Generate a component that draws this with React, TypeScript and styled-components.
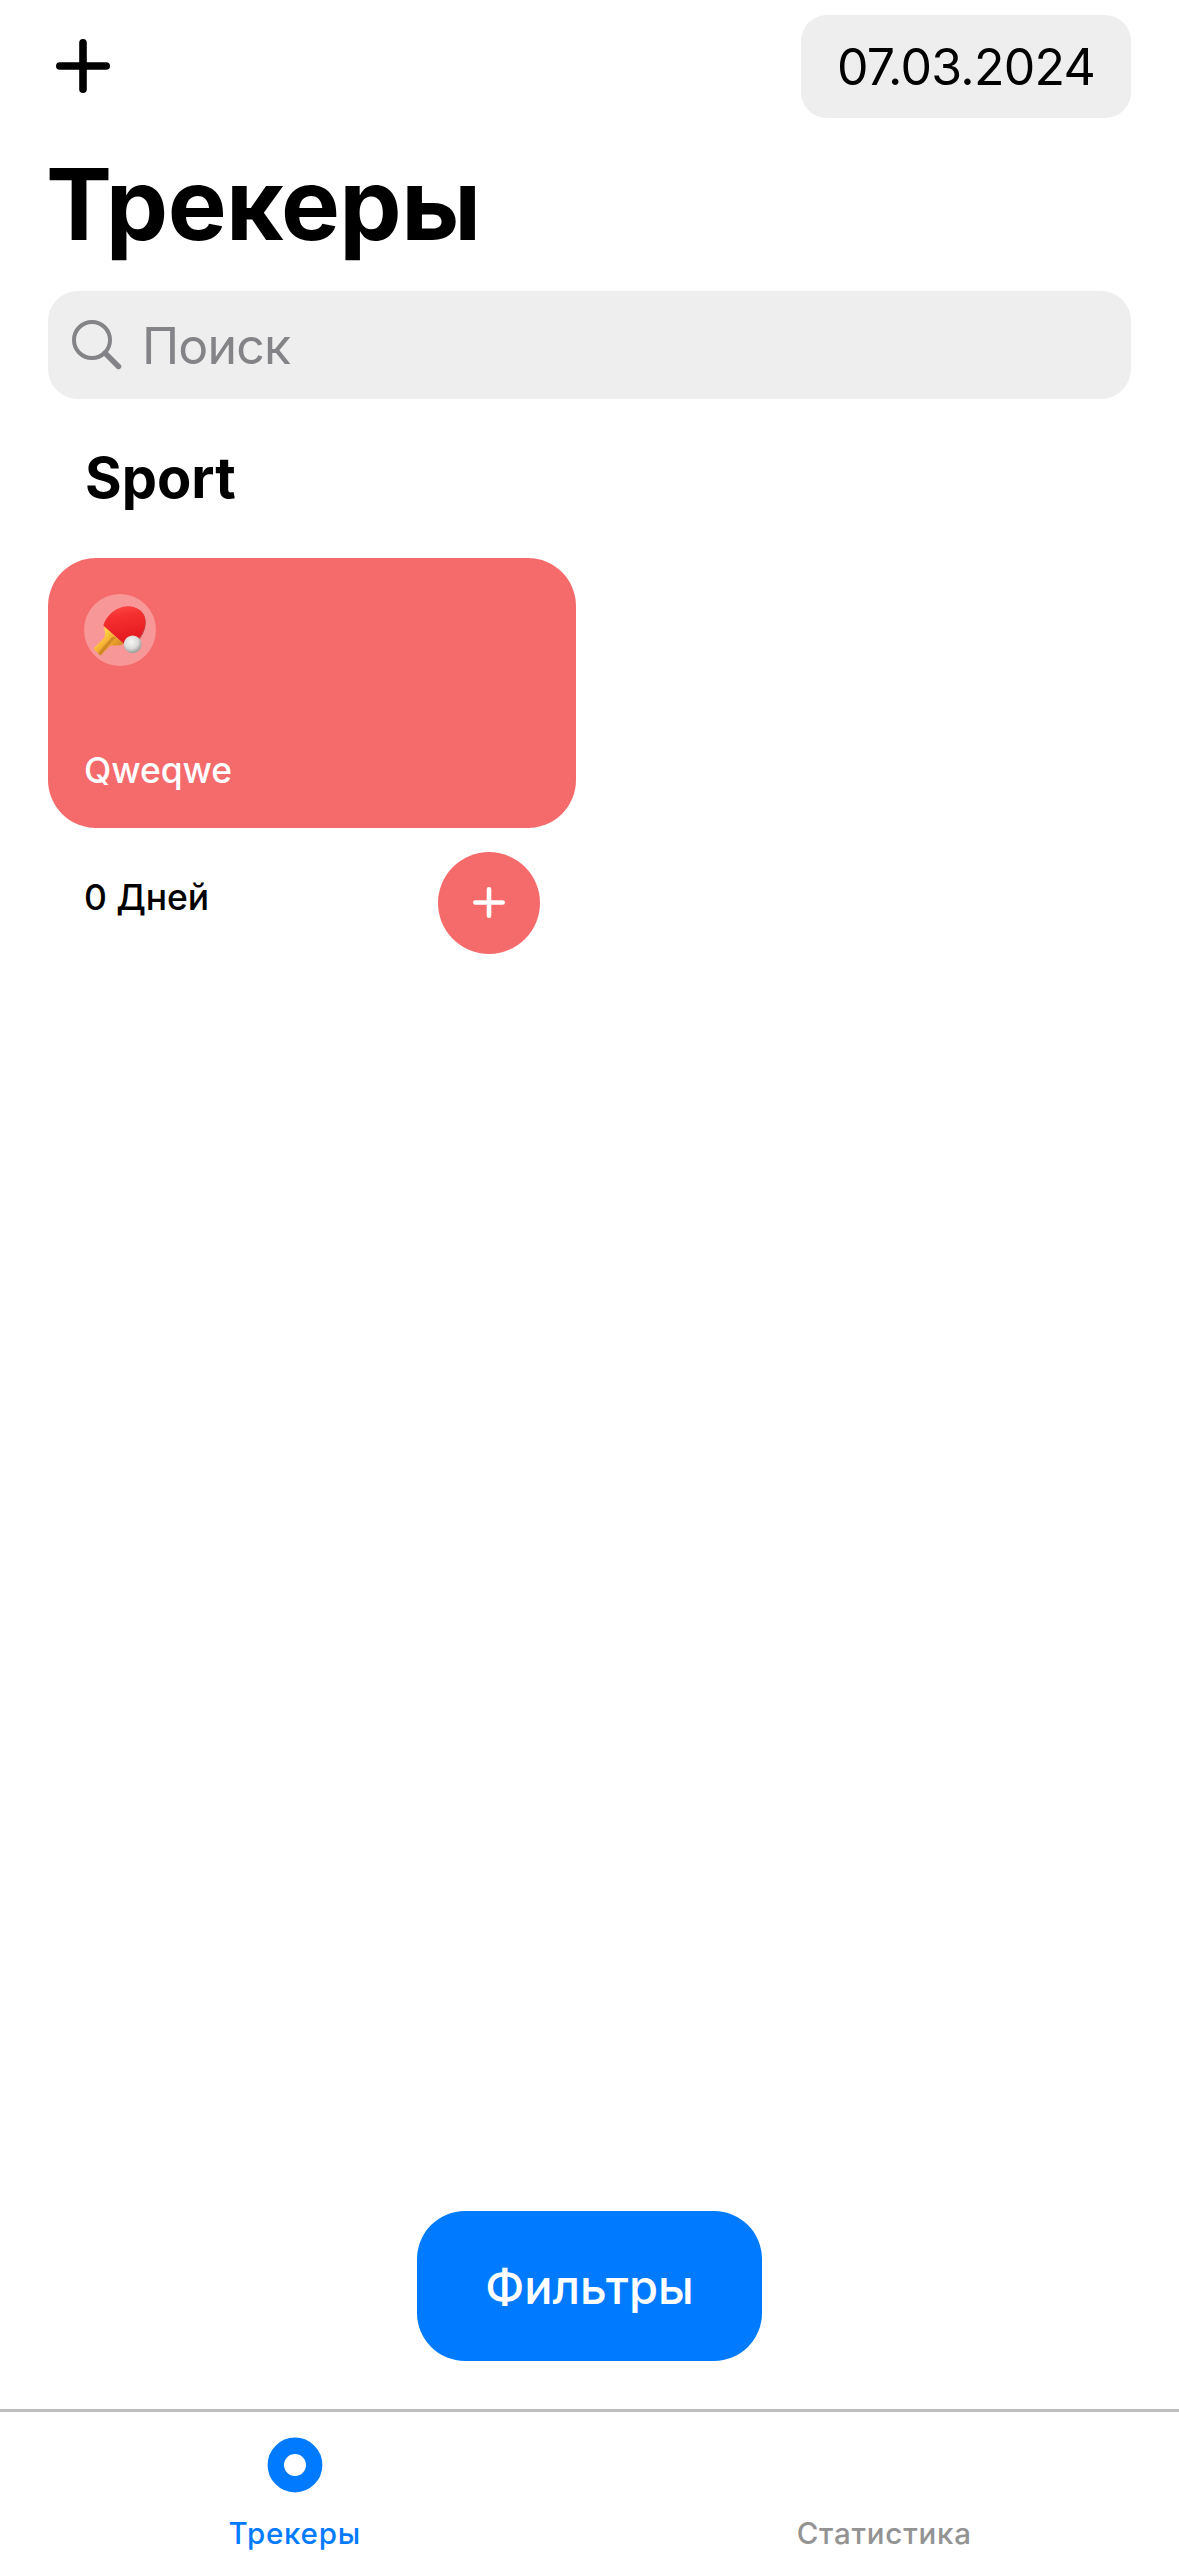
import React from "react";
import styled, { createGlobalStyle } from "styled-components";

const GlobalStyle = createGlobalStyle`
  * { box-sizing: border-box; }
  body { margin: 0; background: #fff; }
  button, input { font: inherit; border: 0; padding: 0; margin: 0; }
`;

const Screen = styled.div`
  width: 1179px;
  height: 2556px;
  display: flex;
  flex-direction: column;
  background: #ffffff;
  color: #000;
  font-family: Inter, "Liberation Sans", sans-serif;
  overflow: hidden;
`;

const Header = styled.header`
  display: flex;
  justify-content: space-between;
  align-items: flex-start;
  padding: 15px 48px 0;
  height: 118px;
`;

const AddButton = styled.button`
  display: flex;
  width: 70px;
  height: 102px;
  align-items: center;
  justify-content: center;
  background: none;
`;

const Text = styled.span<{ $size: number; $weight?: number; $spacing?: number }>`
  display: block;
  font-size: ${(p) => p.$size}px;
  font-weight: ${(p) => p.$weight ?? 400};
  letter-spacing: ${(p) => p.$spacing ?? 0}px;
  white-space: nowrap;
`;

const DatePill = styled.button`
  display: flex;
  width: 330px;
  height: 103px;
  padding: 1px 0 0 36px;
  align-items: center;
  border-radius: 26px;
  background: #eeeeee;
  color: #000;
`;

const Title = styled.h1`
  margin: 24px 0 0 46px;
  height: 124px;
  line-height: 124px;
  font-size: 99px;
  font-weight: 700;
  letter-spacing: -0.6px;
`;

const SearchField = styled.div`
  display: flex;
  align-items: center;
  gap: 20px;
  margin: 25px 48px 0;
  height: 108px;
  padding: 2px 24px 0;
  border-radius: 30px;
  background: #eeeeee;
  color: #848488;
  svg { margin-top: -3px; }
`;

const Section = styled.section`
  display: flex;
  flex-direction: column;
  padding: 0 48px;
`;

const SectionTitle = styled.h2`
  margin: 44px 0 45px 37px;
  height: 70px;
  line-height: 70px;
  font-size: 56px;
  font-weight: 700;
`;

const Grid = styled.div`
  display: grid;
  grid-template-columns: 528px 528px;
  gap: 27px;
`;

const Tracker = styled.article`
  display: flex;
  flex-direction: column;
`;

const Card = styled.div<{ $color: string }>`
  display: flex;
  flex-direction: column;
  justify-content: space-between;
  height: 270px;
  padding: 36px 36px 30px;
  border-radius: 48px;
  background: ${(p) => p.$color};
  color: #fff;
  line-height: 54px;
`;

const EmojiBadge = styled.div`
  display: flex;
  width: 72px;
  height: 72px;
  border-radius: 50%;
  background: rgba(255, 255, 255, 0.3);
`;

const TrackerFooter = styled.div`
  display: flex;
  justify-content: space-between;
  align-items: flex-start;
  padding: 24px 36px 0;
  line-height: 92px;
`;

const RoundButton = styled.button<{ $color: string }>`
  display: flex;
  width: 102px;
  height: 102px;
  border-radius: 50%;
  background: ${(p) => p.$color};
`;

const FilterButton = styled.button`
  display: flex;
  align-items: center;
  justify-content: center;
  align-self: center;
  width: 345px;
  height: 150px;
  margin: auto 0 48px;
  border-radius: 48px;
  background: #007bff;
  color: #fff;
`;

const TabBar = styled.nav`
  display: grid;
  grid-template-columns: 1fr 1fr;
  height: 147px;
  border-top: 3px solid #bdbdbd;
`;

const Tab = styled.button<{ $active?: boolean }>`
  display: flex;
  flex-direction: column;
  align-items: center;
  justify-content: space-between;
  padding: 25px 0 2px;
  line-height: 41px;
  background: none;
  color: ${(p) => (p.$active ? "#007bff" : "#939393")};
`;

const TabIcon = styled.div`
  height: 56px;
  display: flex;
`;

const PaddleIcon = () => (
  <svg width="72" height="72" viewBox="0 0 72 72">
    <defs>
      <linearGradient id="rubber" x1="0" y1="0" x2="0.2" y2="1">
        <stop offset="0" stopColor="#ff4a45" />
        <stop offset="0.35" stopColor="#f52f2f" />
        <stop offset="1" stopColor="#e31a20" />
      </linearGradient>
      <linearGradient id="wood" x1="0" y1="0" x2="1" y2="1">
        <stop offset="0.3" stopColor="#ffd045" />
        <stop offset="0.55" stopColor="#f0a52e" />
        <stop offset="1" stopColor="#b9701c" />
      </linearGradient>
      <radialGradient id="ball" cx="0.42" cy="0.36" r="0.62">
        <stop offset="0" stopColor="#f6f6f4" />
        <stop offset="0.6" stopColor="#dcdcda" />
        <stop offset="1" stopColor="#9f9f9d" />
      </radialGradient>
    </defs>
    <path d="M20.5 31.5 C26 19 36 12.5 46.500 12.800 C57 14 62.300 21 61.800 30 C61 37 58 42 55 46 L39 49 Z" fill="#b94b4b" />
    <path d="M20 32 L40 50 C34 52.300 30 51.500 26.500 51.500 L16.500 61.500 L9.500 54.500 L20.500 43.500 C21.500 40 20.500 36 20 32Z" fill="url(#wood)" />
    <path d="M28 43 L32 43 L25 51 L16.500 61.500 L14 59Z" fill="#b97620" opacity="0.6" />
    <path d="M19.300 31.500 C22 21 33 12.500 43 12.200 C53 12 60.500 18 61.200 26.500 C61.800 33.500 58 41 54 45.500 L39.500 49.300 Z" fill="url(#rubber)" />
    <circle cx="48.700" cy="50.300" r="8.900" fill="url(#ball)" />
  </svg>
);

const App = () => (
  <>
    <GlobalStyle />
    <Screen>
      <Header>
        <AddButton aria-label="+">
          <svg width="54" height="54" viewBox="0 0 54 54">
            <path d="M27 3.800V50.200M3.800 27H50.200" stroke="#000" strokeWidth="7.600" strokeLinecap="round" />
          </svg>
        </AddButton>
        <DatePill>
          <Text $size={50} $spacing={-0.75}>07.03.2024</Text>
        </DatePill>
      </Header>
      <Title>Трекеры</Title>
      <SearchField>
        <svg width="50" height="50" viewBox="0 0 50 50" fill="none" stroke="currentColor">
          <circle cx="20" cy="20" r="18" strokeWidth="4" />
          <path d="M33 33L46.500 46.500" strokeWidth="5.400" strokeLinecap="round" />
        </svg>
        <Text $size={50} $spacing={-0.8}>Поиск</Text>
      </SearchField>
      <Section>
        <SectionTitle>Sport</SectionTitle>
        <Grid>
          <Tracker>
            <Card $color="#f56b6c">
              <EmojiBadge>
                <PaddleIcon />
              </EmojiBadge>
              <Text $size={35.5} $weight={500} $spacing={-0.1}>Qweqwe</Text>
            </Card>
            <TrackerFooter>
              <Text $size={35.5} $weight={500} $spacing={-0.1}>0 Дней</Text>
              <RoundButton $color="#f56b6c" aria-label="+">
                <svg width="102" height="102" viewBox="0 0 102 102">
                  <path d="M51 37.300V63.700M37.300 50.500H64.700" stroke="#fff" strokeWidth="4.600" strokeLinecap="round" />
                </svg>
              </RoundButton>
            </TrackerFooter>
          </Tracker>
        </Grid>
      </Section>
      <FilterButton>
        <Text $size={47} $weight={500}>Фильтры</Text>
      </FilterButton>
      <TabBar>
        <Tab $active>
          <TabIcon>
            <svg width="56" height="56" viewBox="0 0 56 56">
              <circle cx="28" cy="28" r="19.200" fill="none" stroke="currentColor" strokeWidth="16.400" />
            </svg>
          </TabIcon>
          <Text $size={29.5} $weight={500} $spacing={0.8}>Трекеры</Text>
        </Tab>
        <Tab>
          <TabIcon />
          <Text $size={29.5} $weight={500} $spacing={0.8}>Статистика</Text>
        </Tab>
      </TabBar>
    </Screen>
  </>
);

export default App;
